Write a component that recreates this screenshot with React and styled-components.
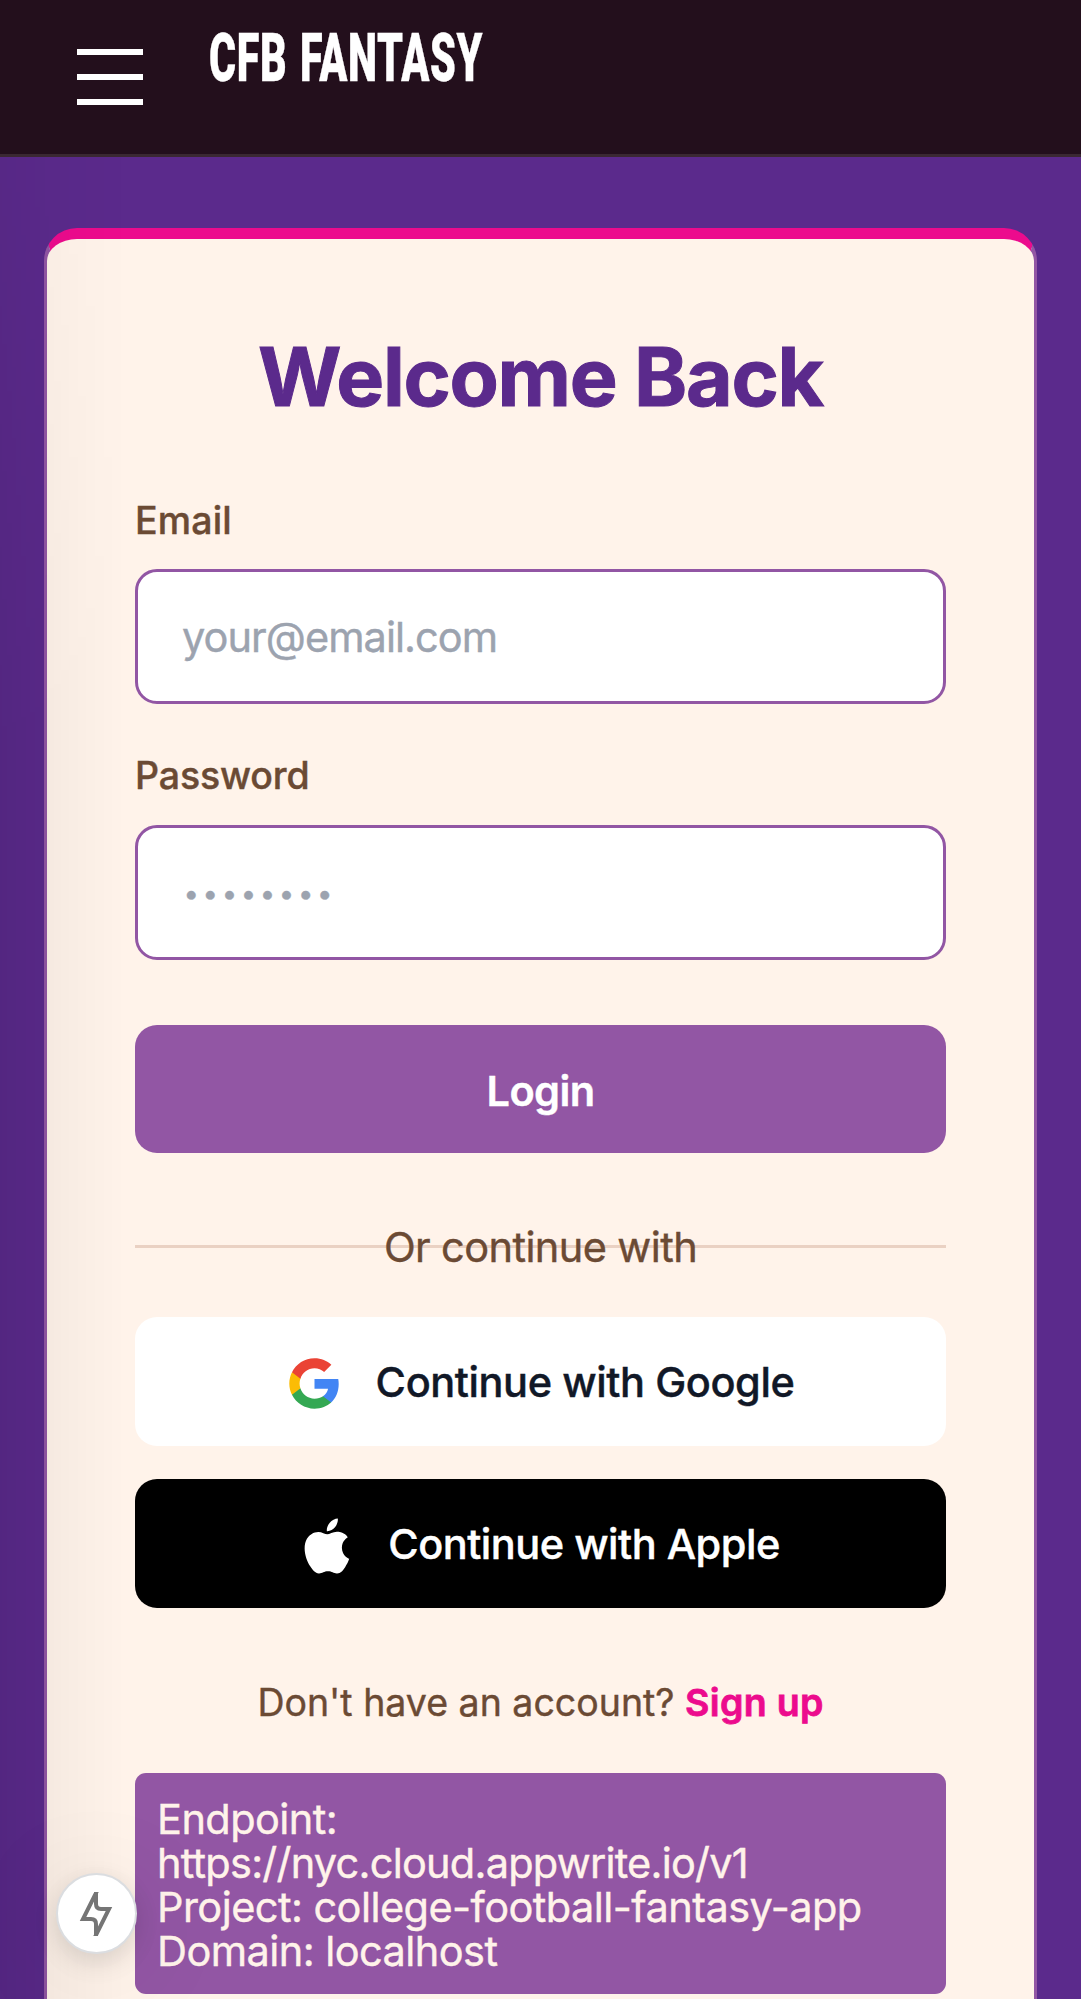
import React from "react";
import styled, { createGlobalStyle } from "styled-components";

const Global = createGlobalStyle`
  *{box-sizing:border-box}
  html,body{margin:0;background:#5b2a8c}
  body{font-family:Inter,"Liberation Sans",sans-serif;height:1999px;overflow:hidden;-webkit-font-smoothing:antialiased;-webkit-text-stroke:.4px currentColor}
  button,input{font:inherit}
`;
const Page = styled.div`position:relative;width:1081px;height:1999px;overflow:hidden;background:#5b2a8c`;
const Header = styled.header`height:157px;background:#230f1c;border-bottom:3px solid #3a2832;display:flex;align-items:flex-start`;
const Menu = styled.div`margin:49px 0 0 77px;width:66px;display:grid;gap:19px`;
const Bar = styled.i`display:block;height:6px;background:#fff`;
const Brand = styled.div`margin:21px 0 0 66px;font:900 66.5px/74px Roboto,sans-serif;letter-spacing:1px;word-spacing:3px;color:#fff;transform:scaleX(.621);transform-origin:0 0;white-space:nowrap`;
const Card = styled.main`margin:71px 0 0 44px;width:993px;height:1900px;padding:0 88px;background:#fff3ea;border:3px solid #9256a4;border-top:11px solid #ec0b8d;border-radius:33px;display:flex;flex-direction:column`;
const Title = styled.h1`margin:88px 0 0;height:101px;font-size:80.5px;line-height:100px;font-weight:700;letter-spacing:-1.3px;color:#5b2a8c;text-align:center;white-space:nowrap;-webkit-text-stroke:1px currentColor`;
const Label = styled.label`margin-top:${p => p.$top}px;font-size:37.5px;line-height:56px;height:56px;font-weight:500;letter-spacing:${p => p.$track}px;color:#6b4a34`;
const Input = styled.input`margin-top:${p => p.$top}px;width:811px;height:135px;flex:none;border:3px solid #9256a4;border-radius:22px;background:#fff;padding:${p => (p.$dots ? "1px 45.5px 0" : "0 44px")};font-size:${p => (p.$dots ? 27.5 : 41.5)}px;outline:0;
  &::placeholder{color:#9ca3af;opacity:1;letter-spacing:${p => (p.$dots ? 3.6 : -0.95)}px}`;
const Button = styled.button`margin-top:${p => p.$top}px;width:811px;height:${p => p.$h}px;flex:none;border:0;border-radius:22px;padding:${p => p.$pad || 0}px ${p => p.$right || 0}px 0 0;background:${p => p.$bg};color:${p => p.$fg};font-size:41.5px;font-weight:${p => p.$w};letter-spacing:${p => p.$track}px;display:flex;align-items:center;justify-content:center;gap:${p => p.$gap || 0}px;white-space:nowrap;
  svg{margin-top:4px;flex:none}`;
const Divider = styled.div`margin-top:66px;width:811px;height:56px;display:grid;place-items:center;font-size:41.5px;line-height:56px;letter-spacing:-.6px;color:#6b4a34;
  &::before{content:"";grid-area:1/1;width:100%;height:3px;background:#ead1c3}
  span{grid-area:1/1;z-index:1}`;
const Signup = styled.p`margin:66.5px 0 0;height:56px;font-size:37.5px;line-height:56px;color:#6b4a34;text-align:center;white-space:nowrap;
  b{color:#ec0b8d;font-weight:600;letter-spacing:.3px;-webkit-text-stroke:.8px currentColor}`;
const Debug = styled.div`margin-top:42.5px;width:811px;height:221px;flex:none;border-radius:11px;background:#9256a4;color:#fff3ea;padding:24px 22px 0;font-size:41.5px;line-height:44px;white-space:nowrap`;
const DebugLine = styled.div`letter-spacing:${p => p.$track || -0.56}px`;
const Shade = styled.div`position:absolute;inset:157px auto 0 0;width:125px;pointer-events:none;background:linear-gradient(90deg,rgba(0,0,0,.08),rgba(0,0,0,.03) 45%,transparent);mask-image:linear-gradient(180deg,rgba(0,0,0,.5),#000 600px)`;
const Fab = styled.div`position:absolute;left:56px;top:1873px;width:81px;height:81px;border-radius:50%;background:#fff;border:2px solid #dbdde0;box-shadow:0 8px 24px rgba(0,0,0,.12),0 12px 110px rgba(0,0,0,.1);display:grid;place-items:center;
  svg{margin-left:-1px;display:block;overflow:hidden}`;

export default function App() {
  return (
    <Page>
      <Global />
      <Header>
        <Menu><Bar /><Bar /><Bar /></Menu>
        <Brand>CFB FANTASY</Brand>
      </Header>
      <Card>
        <Title>Welcome Back</Title>
        <Label $top={65} $track={0.15}>Email</Label>
        <Input $top={20} placeholder="your@email.com" />
        <Label $top={44} $track={-0.15}>Password</Label>
        <Input $top={21} $dots placeholder="••••••••" />
        <Button $top={65.3} $h={127.4} $bg="#9256a4" $fg="#fff" $w={600} $track={-0.6} $pad={4}>Login</Button>
        <Divider><span>Or continue with</span></Divider>
        <Button $top={42.3} $h={129.5} $bg="#fff" $fg="#111827" $w={500} $gap={34} $track={-0.42}>
          <svg width="55" height="55" viewBox="0 0 24 24">
            <path fill="#4285F4" d="M22.56 12.25c0-.78-.07-1.53-.2-2.25H12v4.26h5.92c-.26 1.37-1.04 2.53-2.21 3.31v2.77h3.57c2.08-1.92 3.28-4.74 3.28-8.09z" />
            <path fill="#34A853" d="M12 23c2.97 0 5.46-.98 7.28-2.66l-3.57-2.77c-.98.66-2.23 1.06-3.71 1.06-2.86 0-5.29-1.93-6.16-4.53H2.18v2.84C3.99 20.53 7.7 23 12 23z" />
            <path fill="#FBBC05" d="M5.84 14.09c-.22-.66-.35-1.36-.35-2.09s.13-1.43.35-2.09V7.07H2.18C1.43 8.55 1 10.22 1 12s.43 3.45 1.18 4.93l2.85-2.22.81-.62z" />
            <path fill="#EA4335" d="M12 5.38c1.62 0 3.06.56 4.21 1.64l3.15-3.15C17.45 2.09 14.97 1 12 1 7.7 1 3.99 3.47 2.18 7.07l3.66 2.84c.87-2.6 3.3-4.53 6.16-4.53z" />
          </svg>
          <span>Continue with Google</span>
        </Button>
        <Button $top={32.5} $h={129.5} $bg="#000" $fg="#fff" $w={500} $gap={28} $track={-0.5} $right={7}>
          <svg width="66" height="66" viewBox="0 0 24 24" fill="#fff">
            <path d="M18.71 19.5c-.83 1.24-1.71 2.45-3.05 2.47-1.34.03-1.77-.79-3.29-.79-1.53 0-2 .77-3.27.82-1.31.05-2.3-1.32-3.14-2.53C4.25 17 2.94 12.45 4.7 9.39c.87-1.52 2.43-2.48 4.12-2.51 1.28-.02 2.5.87 3.29.87.78 0 2.26-1.07 3.81-.91.65.03 2.47.26 3.64 1.98-.09.06-2.17 1.28-2.15 3.81.03 3.02 2.65 4.03 2.68 4.04-.03.07-.42 1.44-1.38 2.83M13 3.5c.73-.83 1.94-1.46 2.94-1.5.13 1.17-.34 2.35-1.04 3.19-.69.85-1.83 1.51-2.95 1.42-.15-1.15.41-2.35 1.05-3.11z" />
          </svg>
          <span>Continue with Apple</span>
        </Button>
        <Signup>Don't have an account? <b>Sign up</b></Signup>
        <Debug>
          <DebugLine>Endpoint:</DebugLine>
          <DebugLine $track={-0.77}>https://nyc.cloud.appwrite.io/v1</DebugLine>
          <DebugLine>Project: college-football-fantasy-app</DebugLine>
          <DebugLine>Domain: localhost</DebugLine>
        </Debug>
      </Card>
      <Shade />
      <Fab>
        <svg width="44" height="44" viewBox="0 0 44 44" fill="none" stroke="#757575" strokeWidth="4">
          <path d="M22 -3V12Q22 17 27 17H35L20.5 46L22 47V32Q22 27 17 27H9L23.5 -2Z" />
        </svg>
      </Fab>
    </Page>
  );
}
